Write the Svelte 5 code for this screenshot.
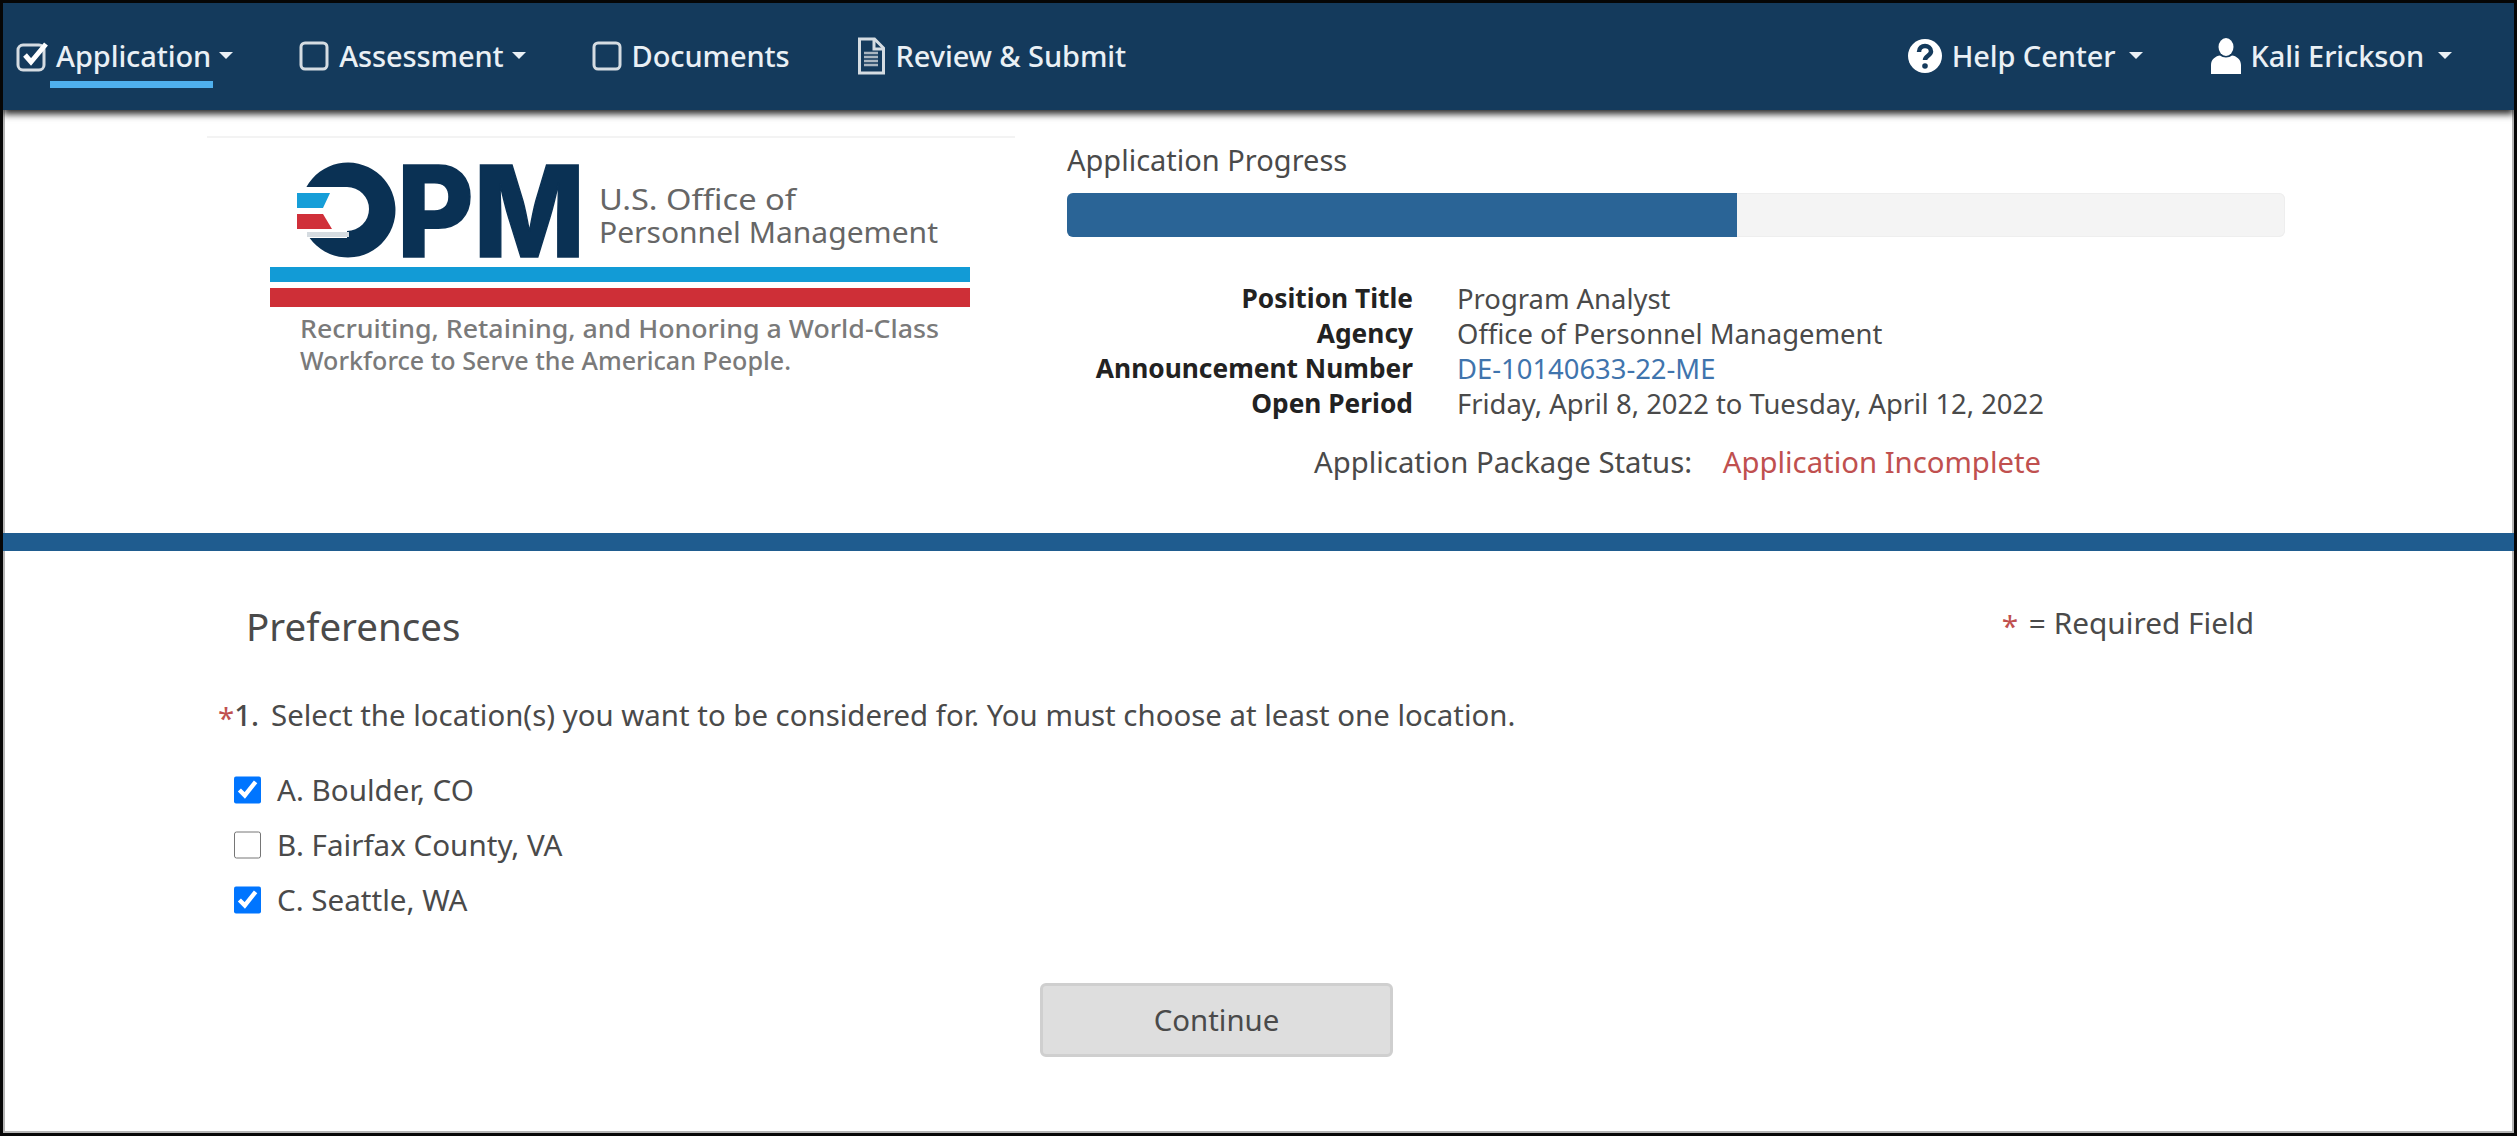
<script lang="ts">

	// Data

	const details = [
		{label: "Position Title", value: "Program Analyst"},
		{label: "Agency", value: "Office of Personnel Management"},
		{label: "Announcement Number", value: "DE-10140633-22-ME", link: true},
		{label: "Open Period", value: "Friday, April 8, 2022 to Tuesday, April 12, 2022"}
	];

	const locations = [
		{label: "A. Boulder, CO", checked: true},
		{label: "B. Fairfax County, VA", checked: false},
		{label: "C. Seattle, WA", checked: true}
	];

	const progress = 55;

</script>

<div class="page">

	<nav>
		<div class="nav-group">
			<a class="nav-item active" href="#app">
				<svg class="check-icon" width="34" height="32" viewBox="0 0 34 32">
					<rect x="2" y="5" width="26" height="25" rx="5" class="outline"/>
					<path d="M9 15l6 7L30 4" class="tick"/>
				</svg>
				<span class="nav-label">Application</span>
				<i class="caret"></i>
			</a>
			<a class="nav-item" href="#app">
				<svg width="30" height="32" viewBox="0 0 30 32">
					<rect x="2" y="3" width="26" height="26" rx="4" class="outline"/>
				</svg>
				<span class="nav-label">Assessment</span>
				<i class="caret"></i>
			</a>
			<a class="nav-item" href="#app">
				<svg width="30" height="32" viewBox="0 0 30 32">
					<rect x="2" y="3" width="26" height="26" rx="4" class="outline"/>
				</svg>
				<span class="nav-label">Documents</span>
			</a>
			<a class="nav-item" href="#app">
				<svg width="30" height="38" viewBox="0 0 30 38">
					<path d="M3.500 2h15l9 9v25h-24z" class="outline"/>
					<path d="M18 2v10h9" class="outline"/>
					<path d="M8 16h14M8 20h14M8 24h14M8 28h14" class="doc-lines"/>
				</svg>
				<span class="nav-label">Review &amp; Submit</span>
			</a>
		</div>
		<div class="nav-group right">
			<a class="nav-item" href="#app">
				<svg width="36" height="36" viewBox="0 0 36 36">
					<circle cx="18" cy="18" r="17" fill="#fff"/>
					<path d="M12 14c0-4 3-6 6-6s6 2 6 5.500c0 4-6 4.500-6 8.500" class="qmark"/>
					<circle cx="18" cy="28" r="2.800" fill="#143a5c"/>
				</svg>
				<span class="nav-label">Help Center</span>
				<i class="caret wide"></i>
			</a>
			<a class="nav-item" href="#app">
				<svg width="30" height="36" viewBox="0 0 30 36">
					<ellipse cx="15" cy="9" rx="7.500" ry="9" fill="#fff"/>
					<path d="M0 36v-9c0-6 5-9 9-9.500 3 2.500 9 2.500 12 0 4 .5 9 3.500 9 9.500v9z" fill="#fff"/>
				</svg>
				<span class="nav-label">Kali Erickson</span>
				<i class="caret wide"></i>
			</a>
		</div>
	</nav>

	<header>

		<div class="logo-column">
			<svg class="logo" width="808" height="250" viewBox="0 -10 808 250">
				<path d="M99.400 50A47.500 47.500 0 1 1 102.600 101H140V94A22 22 0 0 0 140 50z" fill="#0a3154"/>
				<path d="M90 56h33l-7 15H90z" fill="#169ed8"/>
				<path d="M90 77h26l9 15H90z" fill="#d0303a"/>
				<rect x="100" y="95" width="42" height="5" fill="#d5dbe0"/>
				<text x="190" y="120" class="logo-pm" textLength="188" lengthAdjust="spacingAndGlyphs">PM</text>
				<text x="392" y="73" class="logo-name" textLength="197" lengthAdjust="spacingAndGlyphs">U.S. Office of</text>
				<text x="392" y="106" class="logo-name" textLength="339" lengthAdjust="spacingAndGlyphs">Personnel Management</text>
				<rect x="63" y="130" width="700" height="15" fill="#129bd6"/>
				<rect x="63" y="151" width="700" height="19" fill="#ce2f37"/>
				<text x="93" y="201" class="logo-tag" textLength="639" lengthAdjust="spacingAndGlyphs">Recruiting, Retaining, and Honoring a World-Class</text>
				<text x="93" y="233" class="logo-tag" textLength="491" lengthAdjust="spacingAndGlyphs">Workforce to Serve the American People.</text>
			</svg>
		</div>

		<div class="summary">
			<div class="progress-title">Application Progress</div>
			<div class="progress-track">
				<div class="progress-fill" style="width: {progress}%"></div>
			</div>

			<dl>
				{#each details as row}
					<dt>{row.label}</dt>
					<dd class:link={row.link}>{row.value}</dd>
				{/each}
			</dl>

			<p class="status">
				Application Package Status:
				<span>Application Incomplete</span>
			</p>
		</div>

	</header>

	<div class="divider"></div>

	<main>

		<div class="title-row">
			<h1>Preferences</h1>
			<div class="required"><span class="star">*</span> = Required Field</div>
		</div>

		<p class="question"><span class="star">*</span><span class="number">1.</span>Select the location(s) you want to be considered for. You must choose at least one location.</p>

		<div class="options">
			{#each locations as option}
				<label>
					<input type="checkbox" checked={option.checked}>
					{option.label}
				</label>
			{/each}
		</div>

		<div class="actions">
			<button>Continue</button>
		</div>

	</main>

</div>

<style>

	:global(body){
		margin: 0;
		background: #fff;
	}

	.page{
		width: 2517px;
		height: 1136px;
		box-sizing: border-box;
		border: 3px solid #060606;
		box-shadow: inset 0 0 0 2px #b5b5b5;
		font-family: "Noto Sans", "Open Sans", sans-serif;
		font-size: 27.400px;
		color: #4a4a4a;
		overflow: hidden;
	}

	nav{
		position: relative;
		z-index: 1;
		height: 107px;
		padding: 0 62px 0 13px;
		display: flex;
		justify-content: space-between;
		background: #143a5c;
		box-shadow: 0 4px 7px rgba(0, 0, 0, .85);
	}

	.nav-group{
		display: flex;
		gap: 66px;
	}

	.nav-group.right{
		gap: 68px;
	}

	.nav-group.right .nav-item{
		gap: 9px;
	}

	.nav-item{
		position: relative;
		display: flex;
		align-items: center;
		gap: 10px;
		padding-bottom: 2px;
		color: #eaf0f5;
		text-decoration: none;
		font-size: 29px;
		font-weight: 500;
		letter-spacing: -.1px;
	}

	.nav-item.active::after{
		content: "";
		position: absolute;
		left: 34px;
		bottom: 22px;
		width: 163px;
		height: 7px;
		background: #4fb0ee;
	}

	.check-icon{
		margin-right: -4px;
	}

	.nav-label{
		white-space: nowrap;
	}

	.caret{
		width: 0;
		height: 0;
		margin-left: -2px;
		border: 7px solid transparent;
		border-top: 7px solid #eaf0f5;
		border-bottom: 0;
	}

	.caret.wide{
		margin-left: 5px;
	}

	.outline{
		fill: none;
		stroke: #d5dce2;
		stroke-width: 3;
	}

	.tick{
		fill: none;
		stroke: #fff;
		stroke-width: 5;
	}

	.doc-lines{
		fill: none;
		stroke: #aab6c1;
		stroke-width: 2.500;
	}

	.qmark{
		fill: none;
		stroke: #143a5c;
		stroke-width: 4.500;
	}

	header{
		height: 423px;
		box-sizing: border-box;
		padding-left: 204px;
		display: flex;
	}

	.logo-column{
		width: 808px;
		height: fit-content;
		margin-top: 26px;
		border-top: 2px solid #f3f3f3;
	}

	.logo{
		display: block;
		margin-top: -11px;
	}

	.logo-pm{
		font-family: "Inter", "Liberation Sans", sans-serif;
		font-size: 127px;
		font-weight: 800;
		fill: #0a3154;
		stroke: #0a3154;
		stroke-width: 1.500px;
	}

	.logo-name{
		font-size: 29px;
		fill: #666;
	}

	.logo-tag{
		font-size: 25px;
		font-weight: 500;
		fill: #7a7a7a;
	}

	.summary{
		width: 1218px;
		margin-left: 52px;
	}

	.progress-title{
		margin-top: 33px;
		line-height: 34px;
		font-size: 29px;
	}

	.progress-track{
		height: 44px;
		margin-top: 16px;
		border-radius: 6px;
		background: #f4f4f4;
		box-shadow: inset 0 0 0 1px #eee;
		overflow: hidden;
	}

	.progress-fill{
		height: 100%;
		background: #2a6496;
	}

	dl{
		display: grid;
		grid-template-columns: 346px 1fr;
		column-gap: 44px;
		margin: 44px 0 0;
		line-height: 35px;
	}

	dt{
		font-size: 26.300px;
		font-weight: 700;
		color: #222;
		text-align: right;
	}

	dd{
		margin: 0;
	}

	dd.link{
		color: #3f74ad;
	}

	.status{
		margin: 24px 0 0 247px;
		line-height: 35px;
		font-size: 29.300px;
	}

	.status span{
		margin-left: 23px;
		color: #c0504f;
	}

	.divider{
		height: 18px;
		background: #1f5c8f;
	}

	main{
		padding: 0 0 0 215px;
	}

	.title-row{
		display: flex;
		justify-content: space-between;
		align-items: flex-start;
		margin-top: 51px;
		padding-right: 260px;
	}

	h1{
		margin: 0 0 0 28px;
		font-size: 38.500px;
		font-weight: 400;
		line-height: 48px;
	}

	.required{
		margin-top: 3px;
		font-size: 29.800px;
		line-height: 35px;
	}

	.star{
		color: #c0504f;
		vertical-align: -3px;
		line-height: 0;
	}

	.required .star{
		margin-right: 3px;
	}

	.question{
		margin: 47px 0 0;
		line-height: 36px;
		font-size: 29.400px;
	}

	.number{
		margin-right: 12px;
		font-weight: 500;
	}

	.options{
		display: flex;
		flex-direction: column;
		gap: 20px;
		margin: 39px 0 0 16px;
	}

	label{
		display: flex;
		align-items: center;
		gap: 16px;
		line-height: 35px;
		font-size: 29.600px;
	}

	input{
		width: 27px;
		height: 28px;
		margin: 0;
		accent-color: #0075ff;
	}

	.actions{
		width: 353px;
		margin: 66px 0 0 822px;
	}

	button{
		width: 100%;
		height: 74px;
		border: 3px solid #cfcfcf;
		border-radius: 6px;
		background: #dedede;
		font-family: inherit;
		font-size: 29.400px;
		color: #4a4a4a;
	}

</style>
